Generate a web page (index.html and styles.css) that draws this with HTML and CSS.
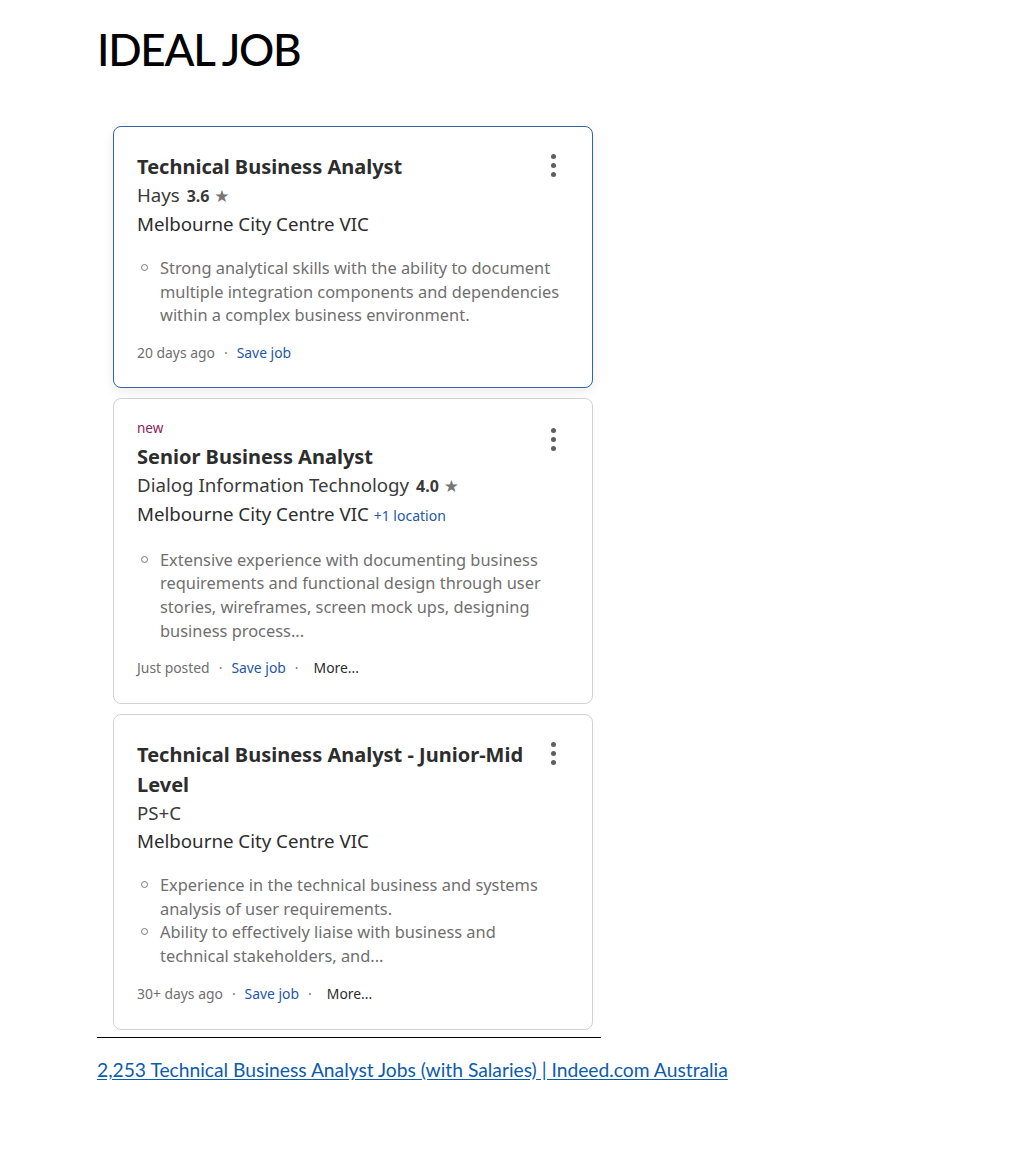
FILE: index.html
```html
<!DOCTYPE html>
<html lang="en">
<head>
<meta charset="utf-8">
<title>Ideal Job</title>
<link rel="stylesheet" href="styles.css">
</head>
<body>
<div class="page">
  <h1 class="doc-title">IDEAL JOB</h1>

  <div class="clip">
    <div class="card card-active">
      <div class="card-head">
        <div class="card-main">
          <h2 class="job-title">Technical Business Analyst</h2>
          <div class="company">Hays <span class="rating">3.6</span> <span class="star">★</span></div>
          <div class="location">Melbourne City Centre VIC</div>
        </div>
        <span class="kebab"><i></i><i></i><i></i></span>
      </div>
      <ul class="snippet">
        <li>Strong analytical skills with the ability to document multiple integration components and dependencies within a complex business environment.</li>
      </ul>
      <div class="meta"><span class="date">20 days ago</span><span class="dot">·</span><span class="save">Save job</span></div>
    </div>

    <div class="card">
      <div class="card-head">
        <div class="card-main">
          <div class="new">new</div>
          <h2 class="job-title tight">Senior Business Analyst</h2>
          <div class="company">Dialog Information Technology <span class="rating">4.0</span> <span class="star">★</span></div>
          <div class="location">Melbourne City Centre VIC <span class="more-loc">+1 location</span></div>
        </div>
        <span class="kebab kebab-low"><i></i><i></i><i></i></span>
      </div>
      <ul class="snippet">
        <li>Extensive experience with documenting business requirements and functional design through user stories, wireframes, screen mock ups, designing business process...</li>
      </ul>
      <div class="meta"><span class="date">Just posted</span><span class="dot">·</span><span class="save">Save job</span><span class="dot">·</span><span class="more">More...</span></div>
    </div>

    <div class="card">
      <div class="card-head">
        <div class="card-main">
          <h2 class="job-title">Technical Business Analyst - Junior-Mid Level</h2>
          <div class="company">PS+C</div>
          <div class="location">Melbourne City Centre VIC</div>
        </div>
        <span class="kebab"><i></i><i></i><i></i></span>
      </div>
      <ul class="snippet">
        <li>Experience in the technical business and systems analysis of user requirements.</li>
        <li>Ability to effectively liaise with business and technical stakeholders, and...</li>
      </ul>
      <div class="meta"><span class="date">30+ days ago</span><span class="dot">·</span><span class="save">Save job</span><span class="dot">·</span><span class="more">More...</span></div>
    </div>
  </div>

  <p class="source"><a href="#">2,253 Technical Business Analyst Jobs (with Salaries) | Indeed.com Australia</a></p>
</div>
</body>
</html>
```

FILE: styles.css
```css
html, body {
  margin: 0;
  padding: 0;
  background: #ffffff;
}

.page {
  padding: 14px 0 0 97px;
  font-family: "Noto Sans", "Open Sans", sans-serif;
}

.doc-title {
  margin: 0;
  font-family: Lato, "Open Sans", sans-serif;
  font-weight: 500;
  font-size: 44px;
  line-height: 70px;
  letter-spacing: -1.3px;
  color: #000000;
}

.clip {
  width: 504px;
  padding: 42px 0 7px 0;
  border-bottom: 1px solid #000000;
}

.card {
  margin-left: 16px;
  width: 480px;
  border: 1px solid #d4d2d0;
  border-radius: 8px;
  padding: 24px 23px 25px 23px;
  box-sizing: border-box;
  background: #ffffff;
  color: #2d2d2d;
}

.card + .card {
  margin-top: 10px;
}

.card-active {
  padding-bottom: 24px;
  border-color: #3563a8;
  box-shadow: 0 4px 12px rgba(0, 0, 0, 0.08);
}

.card-head {
  display: flex;
  justify-content: space-between;
  align-items: flex-start;
}

.card-main {
  flex: 1;
  min-width: 0;
}

.job-title {
  margin: 0;
  padding: 1px 20px 0 0;
  font-size: 20px;
  font-weight: 700;
  line-height: 30px;
  color: #2d2d2d;
}

.job-title.tight {
  margin-top: 3px;
}

.new {
  margin-top: -5px;
  font-size: 13.5px;
  line-height: 20px;
  color: #8a1e5a;
}

.company,
.location {
  font-size: 18.7px;
  line-height: 28px;
  color: #2d2d2d;
}

.company {
  margin-top: -1px;
  color: #3a3a3a;
}

.rating {
  font-size: 16px;
  font-weight: 700;
  margin-left: 2px;
}

.star {
  font-size: 17px;
  color: #767676;
  font-family: "DejaVu Sans", sans-serif;
}

.more-loc {
  font-size: 14px;
  color: #2557a7;
}

.kebab {
  display: flex;
  flex-direction: column;
  align-items: center;
  gap: 4px;
  width: 14px;
  padding-top: 3px;
  margin-right: 9px;
}

.kebab-low {
  padding-top: 5px;
}

.kebab i {
  display: block;
  width: 5px;
  height: 5px;
  border-radius: 50%;
  background: #5f5f5f;
}

.snippet {
  margin: 18px 0 0 0;
  padding: 0 6px 0 0;
  list-style: none;
  font-size: 16.4px;
  line-height: 23.6px;
  color: #6f6f6f;
}

.snippet li {
  display: grid;
  grid-template-columns: 23px 1fr;
}

.snippet li::before {
  content: "";
  width: 5px;
  height: 5px;
  margin: 8px 0 0 4px;
  border: 1.5px solid #7a7a7a;
  border-radius: 50%;
}

.meta {
  margin-top: 16px;
  font-size: 13.9px;
  line-height: 20px;
  color: #6f6f6f;
  display: flex;
  align-items: center;
}

.dot {
  margin: 0 9px;
  color: #767676;
}

.save {
  color: #2557a7;
}

.more {
  margin-left: 6px;
  color: #2d2d2d;
}

.source {
  margin: 20px 0 0 0;
  font-family: Lato, "Open Sans", sans-serif;
  font-size: 19.25px;
  line-height: 24px;
}

.source a {
  color: #0b5cad;
  text-decoration: underline;
  text-underline-offset: 2px;
}
```
